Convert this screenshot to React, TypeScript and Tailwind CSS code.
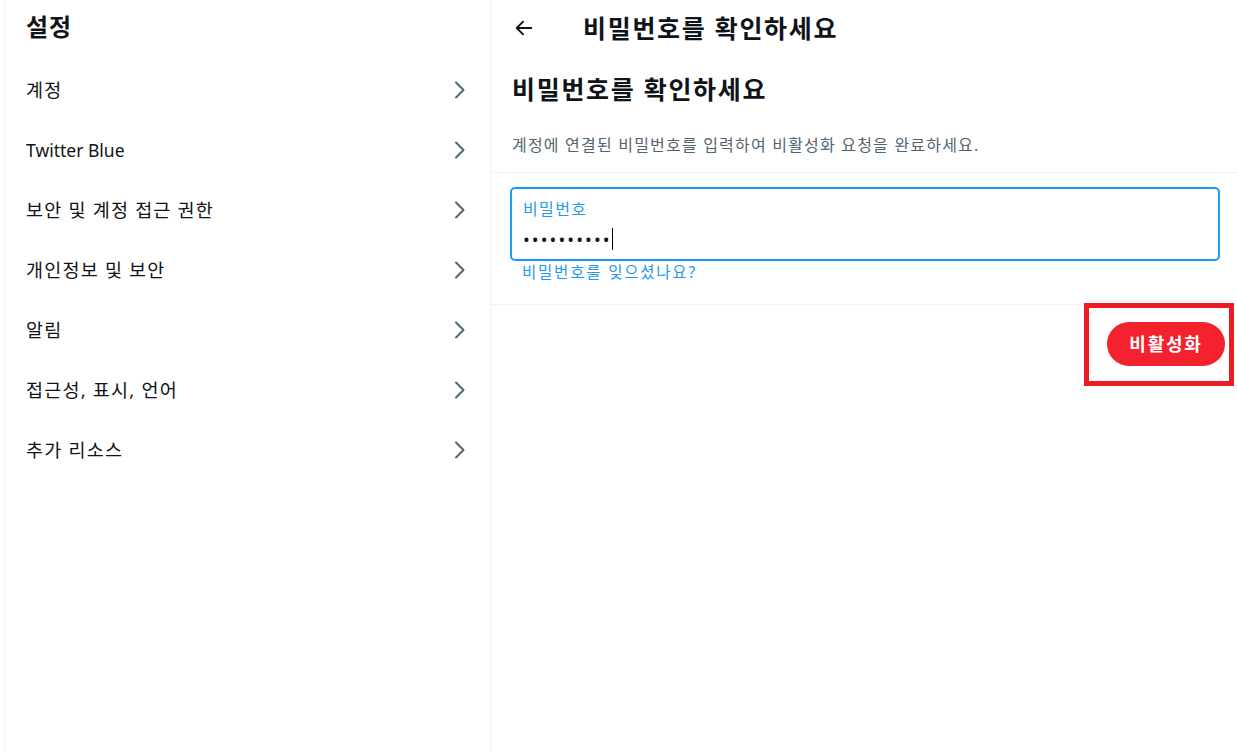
import React from "react";

const font = { fontFamily: '"Noto Sans", "Noto Sans CJK KR", sans-serif' };

function Chevron() {
  return (
    <svg width="12" height="18" viewBox="0 0 12 18" fill="none" className="shrink-0">
      <path d="M2 1.5 L9.5 9 L2 16.5" stroke="#536471" strokeWidth="2" strokeLinecap="round" strokeLinejoin="round" />
    </svg>
  );
}

const items = [
  "계정",
  "Twitter Blue",
  "보안 및 계정 접근 권한",
  "개인정보 및 보안",
  "알림",
  "접근성, 표시, 언어",
  "추가 리소스",
];

export default function App() {
  return (
    <div className="flex h-[753px] w-full bg-white overflow-hidden text-[#0f1419]" style={font}>
      <div className="ml-[4px] w-[487px] shrink-0 border-x border-[#eff3f4] flex flex-col">
        <div className="h-[60px] flex items-center pl-[21px] pb-[7px]">
          <h1 className="text-[24px] font-bold leading-none tracking-[1px]">설정</h1>
        </div>
        {items.map((t) => (
          <div key={t} className="h-[60px] flex items-center justify-between pl-[21px] pr-[24px]">
            {t === "Twitter Blue" ? (
              <span className="text-[17.5px] leading-none text-[#0f1419] pt-[2px]">{t}</span>
            ) : (
              <span className="text-[18.5px] leading-none text-[#0f1419] tracking-[1.2px]">{t}</span>
            )}
            <Chevron />
          </div>
        ))}
      </div>

      <div className="flex-1 flex flex-col">
        <div className="h-[56px] flex items-center pl-[22px]">
          <svg width="22" height="22" viewBox="0 0 24 24" fill="none" className="shrink-0">
            <path d="M20 12 H4.5 M11 5 L4 12 L11 19" stroke="#0f1419" strokeWidth="2" strokeLinecap="round" strokeLinejoin="round" />
          </svg>
          <h2 className="ml-[48px] text-[25px] font-bold leading-none tracking-[1.7px]">비밀번호를 확인하세요</h2>
        </div>
        <div className="pl-[21px] pt-[21px]">
          <h3 className="text-[25px] font-bold leading-none tracking-[1.7px]">비밀번호를 확인하세요</h3>
        </div>
        <div className="pl-[21px] pt-[35px] pb-[19px] border-b border-[#eff3f4]">
          <p className="text-[16px] leading-none text-[#536471] tracking-[1.2px]">
            계정에 연결된 비밀번호를 입력하여 비활성화 요청을 완료하세요.
          </p>
        </div>
        <div className="pl-[19px] pr-[17px] pt-[14px] pb-[23px] border-b border-[#eff3f4]">
          <div className="h-[74px] rounded-[5px] border-2 border-[#1d9bf0] px-[11px] pt-[12px]">
            <div className="text-[16px] leading-none text-[#1d9bf0] tracking-[1.4px]">비밀번호</div>
            <div className="mt-[10px] flex items-center h-[24px]">
              <span className="text-[18px] leading-none tracking-[2.1px] text-[#0f1419]">••••••••••</span>
              <span className="w-[1px] h-[22px] bg-black"></span>
            </div>
          </div>
          <div className="pl-[12px] pt-[4px] text-[15.5px] leading-none text-[#1d9bf0] tracking-[1.8px]">
            비밀번호를 잊으셨나요?
          </div>
        </div>
        <div className="flex justify-end pr-[3px] -mt-[2px]">
          <div className="border-[5px] border-[#ed1c24] w-[150px] h-[83px] flex items-center justify-end pr-[4px]">
            <button className="h-[44px] w-[118px] rounded-full bg-[#f4212e] text-white text-[18px] font-bold leading-none tracking-[1.8px]">
              비활성화
            </button>
          </div>
        </div>
      </div>
    </div>
  );
}
